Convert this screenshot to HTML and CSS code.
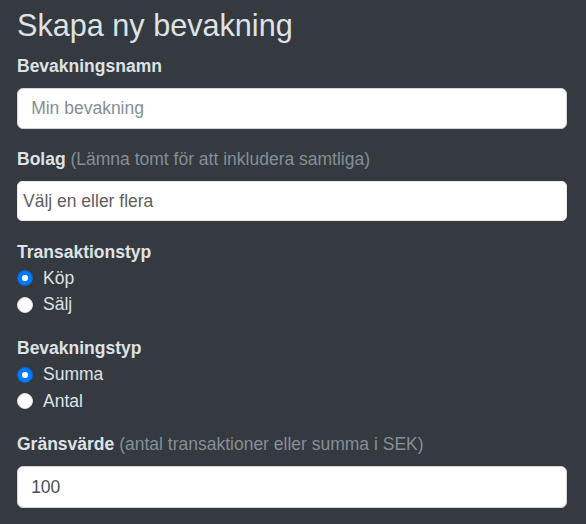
FILE: index.html
```html
<!DOCTYPE html>
<html lang="sv">
<head>
    <meta charset="UTF-8">
    <meta name="viewport" content="width=device-width, initial-scale=1.0">
    <title>Skapa ny bevakning</title>
    <link rel="stylesheet" href="styles.css">
</head>
<body>
    <main class="page">
        <h1 class="title">Skapa ny bevakning</h1>

        <form class="watch-form">
            <div class="field">
                <label class="field-label" for="watch-name">Bevakningsnamn</label>
                <input class="text-input" type="text" id="watch-name" placeholder="Min bevakning">
            </div>

            <div class="field">
                <label class="field-label">Bolag <span class="hint">(Lämna tomt för att inkludera samtliga)</span></label>
                <div class="multiselect">
                    <span class="multiselect-placeholder">Välj en eller flera</span>
                </div>
            </div>

            <div class="field">
                <div class="group-label">Transaktionstyp</div>
                <label class="radio-row">
                    <input class="radio" type="radio" name="tx-type" checked>
                    <span>Köp</span>
                </label>
                <label class="radio-row">
                    <input class="radio" type="radio" name="tx-type">
                    <span>Sälj</span>
                </label>
            </div>

            <div class="field">
                <div class="group-label">Bevakningstyp</div>
                <label class="radio-row">
                    <input class="radio" type="radio" name="watch-type" checked>
                    <span>Summa</span>
                </label>
                <label class="radio-row">
                    <input class="radio" type="radio" name="watch-type">
                    <span>Antal</span>
                </label>
            </div>

            <div class="field">
                <label class="field-label" for="limit">Gränsvärde <span class="hint">(antal transaktioner eller summa i SEK)</span></label>
                <input class="text-input" type="text" id="limit" value="100">
            </div>
        </form>
    </main>
</body>
</html>
```

FILE: styles.css
```css
html {
    font-size: 17.5px;
}

body {
    font-family: 'Liberation Sans', Arial, sans-serif;
    background: #343a40;
    color: #dee2e6;
    margin: 0;
    padding: 0;
    line-height: 1.5;
}

.page {
    padding: 7px 19px 0 17px;
}

.title {
    font-size: 1.75rem;
    font-weight: 400;
    line-height: 1.2;
    margin: 0 0 0.5rem;
}

.watch-form {
    margin: 0;
}

.field {
    margin-bottom: 1rem;
}

.field-label {
    display: block;
    font-weight: bold;
    margin-bottom: 0.5rem;
}

.group-label {
    font-weight: bold;
}

.hint {
    font-weight: normal;
    color: #868e96;
}

.text-input {
    display: block;
    box-sizing: border-box;
    width: 100%;
    height: calc(1.5em + 0.75rem + 2px);
    padding: 0.375rem 0.75rem;
    font-family: inherit;
    font-size: 1rem;
    line-height: 1.5;
    color: #495057;
    background: #fff;
    border: 1px solid #ced4da;
    border-radius: 6px;
    outline: none;
}

.text-input::placeholder {
    color: #868e96;
}

.multiselect {
    box-sizing: border-box;
    height: 40px;
    padding: 6px 5px;
    background: #fff;
    border: 1px solid #e8e8e8;
    border-radius: 5px;
    color: #5e5e5e;
}

.radio-row {
    display: flex;
    align-items: center;
    gap: 10px;
    height: 1.5rem;
    line-height: 1.5;
    min-height: 26.25px;
}

.radio {
    appearance: none;
    -webkit-appearance: none;
    box-sizing: border-box;
    width: 16px;
    height: 16px;
    margin: 0;
    border-radius: 50%;
    background: #fff;
    border: 1px solid #dcdfe3;
}

.radio:checked {
    border-color: #0069d9;
    background: radial-gradient(circle, #fff 0, #fff 2.8px, #007bff 3.4px);
}
```
